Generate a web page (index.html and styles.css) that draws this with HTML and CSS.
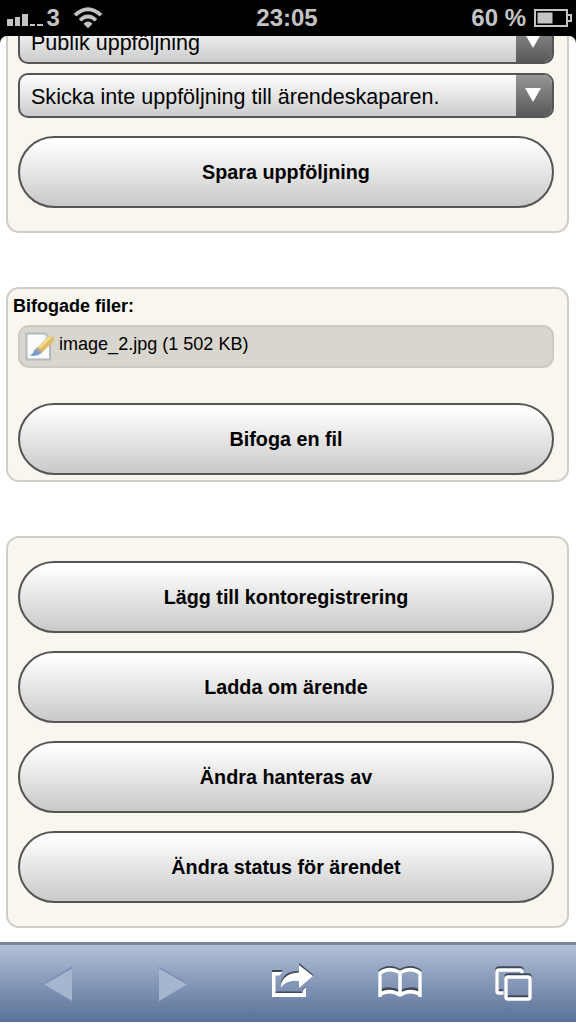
FILE: index.html
```html
<!DOCTYPE html>
<html lang="sv">
<head>
    <meta charset="UTF-8">
    <meta name="viewport" content="width=device-width, initial-scale=1.0">
    <title>Ärende</title>
    <link rel="stylesheet" href="styles.css">
</head>
<body>
    <div class="phone">
        <!-- Status bar -->
        <header class="status">
            <div class="carrier">
                <div class="signal"><i class="b1"></i><i class="b2"></i><i class="b3"></i><i></i><i></i></div>
                <span>3</span>
                <svg class="wifi" width="30" height="22" viewBox="0 0 30 22">
                    <path d="M2 8.2 Q15 -3.8 28 8.2" fill="none" stroke="#c3c3c3" stroke-width="3.8"/>
                    <path d="M7 13.2 Q15 5.8 23 13.2" fill="none" stroke="#c3c3c3" stroke-width="3.6"/>
                    <path d="M10.5 16.8 Q15 12.4 19.5 16.8 L15 21.2 Z" fill="#c3c3c3"/>
                </svg>
            </div>
            <div class="clock">23:05</div>
            <div class="power">
                <span>60 %</span>
                <svg width="38" height="19" viewBox="0 0 38 19">
                    <path d="M1 1 H33 V17 H1 Z M34 6 H37 V12 H34" fill="none" stroke="#c3c3c3" stroke-width="2"/>
                    <rect x="3.5" y="3.5" width="15" height="11" fill="#c3c3c3"/>
                </svg>
            </div>
        </header>

        <main class="page">
            <section class="panel follow-up">
                <div class="select">
                    <span class="value">Publik uppföljning</span>
                    <span class="arrow"><svg width="16" height="14" viewBox="0 0 16 14"><path d="M0 0 H16 L8 14 Z" fill="#fff"/></svg></span>
                </div>
                <div class="select">
                    <span class="value">Skicka inte uppföljning till ärendeskaparen.</span>
                    <span class="arrow"><svg width="16" height="14" viewBox="0 0 16 14"><path d="M0 0 H16 L8 14 Z" fill="#fff"/></svg></span>
                </div>
                <button type="button">Spara uppföljning</button>
            </section>

            <!-- Attachments -->
            <section class="panel files">
                <h2>Bifogade filer:</h2>
                <div class="file">
                    <svg width="30" height="30" viewBox="0 0 30 30">
                        <path d="M1.500 1.500 H20 L25 7 V27.500 H1.500 Z" fill="#fafbfd" stroke="#b4b7bd" stroke-width="2"/>
                        <path d="M19.500 2 V7 H24.500" fill="#e4e5e8"/>
                        <path d="M11.500 16 L24 4 L29 5.500 V9 L17 20.500 Z" fill="#dfbd62"/>
                        <path d="M13 16.500 L25.500 5" stroke="#f2dc94" stroke-width="2.500"/>
                        <path d="M10 17.500 L12.500 15 L18 19.500 L15.500 22 Z" fill="#b9a98f"/>
                        <path d="M10 17 L16 21.500 Q12 25 5 23.500 Q8.500 21.500 10 17 Z" fill="#7b9bcb"/>
                    </svg>
                    <span>image_2.jpg (1 502 KB)</span>
                </div>
                <button type="button">Bifoga en fil</button>
            </section>

            <!-- Case actions -->
            <section class="panel actions">
                <button type="button">Lägg till kontoregistrering</button>
                <button type="button">Ladda om ärende</button>
                <button type="button">Ändra hanteras av</button>
                <button type="button">Ändra status för ärendet</button>
            </section>
        </main>

        <!-- Browser toolbar -->
        <nav class="toolbar">
            <svg width="44" height="44" viewBox="0 0 44 44">
                <path d="M8.500 21 L36 4.500 V9 L12 23 Z" fill="#7890b4"/>
                <path d="M8.500 22.500 L36 6.500 V39 Z" fill="#a5b6cf"/>
            </svg>
            <svg width="44" height="44" viewBox="0 0 44 44">
                <path d="M10 4.500 L38 21 L34 23 L10 9 Z" fill="#7890b4"/>
                <path d="M10 6.500 L38 22.500 L10 39 Z" fill="#a5b6cf"/>
            </svg>
            <svg class="share" width="44" height="44" viewBox="0 0 44 44">
                <g fill="#3d4858">
                    <path d="M2 8 H13 L10 11 H2 Z"/>
                    <path d="M11 21 Q13 9 29 9 V1 L43.500 13 L40 16 L29 10 Z"/>
                    <path d="M5 29.500 H33 V31.500 H5 Z"/>
                    <path d="M32 28 L36 24 V26.500 L32 30 Z"/>
                </g>
                <path d="M2 10 H12.500 L9.500 13.500 H5.500 V31 H32.500 V28.500 L36 25 V35 H2 Z" fill="#fff"/>
                <path d="M11 26 Q11 11.500 29 10.500 V3 L43 14 L29 26 V19 Q16 17.500 11 26 Z" fill="#fff"/>
            </svg>
            <svg class="book" width="48" height="44" viewBox="0 0 48 44">
                <path d="M4 32 V9 Q13 2.500 24 8.500 Q35 2.500 44 9 V32 M4 29 Q14 24 24 30 Q34 24 44 29" fill="none" stroke="#3d4858" stroke-width="3"/>
                <path d="M4 35 V11 Q13 4.500 24 10.500 Q35 4.500 44 11 V35 M24 10 V34 M3.500 32.500 Q14 26.500 24 33 Q34 26.500 44.500 32.500" fill="none" stroke="#fff" stroke-width="3.500"/>
            </svg>
            <svg width="44" height="44" viewBox="0 0 44 44">
                <g fill="none" stroke-width="3.500">
                    <path d="M11 29 H7 Q5 29 5 27 V8 Q5 6 7 6 H28 Q30 6 30 8 V11" stroke="#3d4858"/>
                    <path d="M11.500 31 H7 Q5 31 5 29 V10 Q5 8 7 8 H28 Q30 8 30 10 V13" stroke="#fff"/>
                    <rect x="14" y="13" width="24" height="22" rx="2" stroke="#3d4858"/>
                    <rect x="14" y="15" width="24" height="22" rx="2" stroke="#fff"/>
                </g>
            </svg>
        </nav>
    </div>
</body>
</html>
```

FILE: styles.css
```css
body {
    margin: 0;
    background-color: #fff;
    font-family: "Liberation Sans", Arial, sans-serif;
    color: #000;
}
.phone {
    display: flex;
    flex-direction: column;
    height: 1024px;
    overflow: hidden;
    background: linear-gradient(#000 50px, #fff 50px);
}

/* Status bar */
.status {
    display: grid;
    grid-template-columns: 1fr auto 1fr;
    align-items: center;
    height: 36px;
    flex: none;
    padding: 0 4px 0 7px;
    box-sizing: border-box;
    background-color: #000;
    color: #c3c3c3;
    font-size: 24px;
    font-weight: bold;
}
.carrier, .power {
    display: flex;
    align-items: center;
}
.clock {
    margin-right: 5px;
}
.power {
    justify-content: flex-end;
    gap: 8px;
}
.signal {
    display: flex;
    align-items: flex-end;
    gap: 2px;
    height: 12px;
    margin: 4px 4px 0 0;
}
.signal i {
    width: 5.5px;
    height: 2px;
    background-color: #c3c3c3;
}
.signal .b1 {
    height: 7px;
}
.signal .b2 {
    height: 9px;
}
.signal .b3 {
    height: 12px;
}
.wifi {
    margin-left: 13.5px;
}

/* Page */
.page {
    height: 906px;
    flex: none;
    overflow: hidden;
    background-color: #fff;
    border-radius: 7px 7px 0 0;
}
.panel {
    margin: 0 7px 54px 6px;
    padding: 0 13px 0 10px;
    border: 2px solid #cfcec6;
    border-radius: 13px;
    background-color: #f9f6f0;
}
.follow-up {
    margin-top: -32px;
    padding-top: 13px;
    padding-bottom: 23px;
}
.select {
    display: flex;
    height: 45px;
    margin-bottom: 9px;
    box-sizing: border-box;
    border: 2px solid #555;
    border-radius: 10px;
    overflow: hidden;
    background: linear-gradient(#fff, #cbcbcb);
}
.value {
    flex: 1;
    padding-left: 11px;
    font-size: 21.55px;
    line-height: 44px;
    white-space: nowrap;
}
.arrow {
    display: flex;
    align-items: center;
    justify-content: center;
    width: 36px;
    background: linear-gradient(#969696, #585858);
}
.arrow svg {
    margin: 0 2px 2px 0;
}
button {
    display: block;
    width: 100%;
    height: 72px;
    border: 2px solid #555;
    border-radius: 36px;
    background: linear-gradient(#fff 5%, #c9c9c9);
    color: #000;
    font-family: inherit;
    font-size: 19.75px;
    font-weight: bold;
}
.follow-up button {
    margin-top: 18px;
}
.files {
    padding-bottom: 5px;
}
.files h2 {
    margin: 6px 0 8px -5px;
    font-size: 18px;
    line-height: 22px;
}
.file {
    display: flex;
    align-items: center;
    gap: 4px;
    height: 43px;
    margin-bottom: 35px;
    padding-left: 5px;
    box-sizing: border-box;
    border: 2px solid #cccac2;
    border-radius: 11px;
    background-color: #d9d6cf;
    font-size: 18.05px;
}
.file span {
    margin-top: -5px;
}
.actions {
    display: grid;
    gap: 18px;
    padding-top: 23px;
    padding-bottom: 23px;
}

/* Toolbar */
.toolbar {
    display: flex;
    align-items: center;
    justify-content: space-between;
    height: 80px;
    flex: none;
    padding: 0 40px 0 36px;
    box-sizing: border-box;
    border-top: 3px solid #7c8695;
    background: linear-gradient(#b3c1d6, #8497b7 50%, #597298);
}
.share {
    margin: 0 -8px 0 8px;
}
.book {
    margin: 0 -1px 0 1px;
}
```
